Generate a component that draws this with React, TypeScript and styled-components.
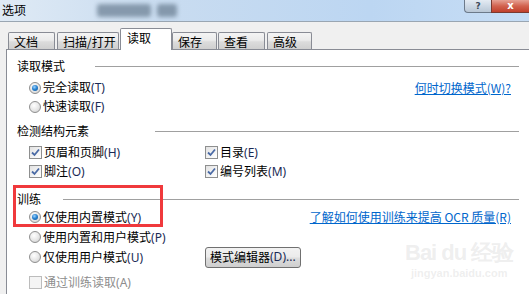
import React from "react";
import styled, { createGlobalStyle, css } from "styled-components";

const Global = createGlobalStyle`
  html, body { margin: 0; padding: 0; background: #f0f0f0; }
  body {
    font-family: "Microsoft YaHei", "Noto Sans CJK SC", "Noto Sans", sans-serif;
    font-size: 12px;
    color: #000;
  }
`;

const Window = styled.div`
  width: 529px;
  height: 294px;
  overflow: hidden;
  background: #f0f0f0;
  display: flex;
  flex-direction: column;
  position: relative;
`;

const TitleBar = styled.div`
  height: 21px;
  flex: none;
  display: flex;
  align-items: flex-start;
  background: linear-gradient(90deg, #dfeaf5 0%, #c9dcf0 30%, #bcd6f2 70%, #c6ddf5 100%);
  border-bottom: 1px solid #9aa6b2;
  position: relative;
`;

const Title = styled.div`
  padding: 3px 0 0 2px;
  font-size: 12px;
  line-height: 14px;
  color: #000;
`;

const Redaction = styled.div`
  position: absolute;
  top: 4px;
  height: 13px;
  border-radius: 3px;
  background: rgba(110, 130, 150, 0.75);
  filter: blur(2px);
`;

const Spacer = styled.div`
  flex: 1;
`;

const HelpButton = styled.div`
  width: 27px;
  height: 13px;
  box-sizing: border-box;
  border: 1px solid #6c7a8a;
  border-top: none;
  border-right: none;
  border-bottom-left-radius: 4px;
  background: linear-gradient(180deg, #e4ebf3 0%, #c9d5e2 60%, #b9c7d6 100%);
  color: #3d4b5a;
  font-family: "DejaVu Sans", sans-serif;
  font-weight: bold;
  font-size: 9px;
  line-height: 12px;
  text-align: center;
`;

const CloseButton = styled.div`
  width: 38px;
  height: 13px;
  box-sizing: border-box;
  border-left: 1px solid #7a3a30;
  border-bottom: 1px solid #7a3a30;
  background: linear-gradient(180deg, #e6a294 0%, #d2634f 50%, #c0402c 100%);
  color: #fff;
  font-family: "DejaVu Sans", sans-serif;
  font-weight: bold;
  font-size: 10px;
  line-height: 11px;
  text-align: center;
`;

const Body = styled.div`
  padding-top: 6px;
  display: flex;
  flex-direction: column;
`;

const TabRow = styled.div`
  height: 21px;
  display: flex;
  align-items: flex-end;
  padding-left: 8px;
  position: relative;
  z-index: 2;
`;

const Tab = styled.div<{ $w: number; $ml: number; $active?: boolean }>`
  width: ${(p) => p.$w}px;
  margin-left: ${(p) => p.$ml}px;
  box-sizing: border-box;
  border: 1px solid #898c95;
  border-bottom: none;
  border-radius: 2px 2px 0 0;
  font-size: 12px;
  white-space: nowrap;
  ${(p) =>
    p.$active
      ? css`
          height: 22px;
          margin-bottom: -1px;
          background: #fff;
          padding: 2px 0 0 6px;
          line-height: 14px;
        `
      : css`
          height: 17px;
          background: linear-gradient(180deg, #f4f4f4 0%, #ebebeb 45%, #dcdcdc 55%, #cfcfcf 100%);
          padding: 2px 0 0 5px;
          line-height: 14px;
        `}
`;

const Panel = styled.div`
  margin-left: 6px;
  width: 540px;
  height: 260px;
  box-sizing: border-box;
  background: #fff;
  border: 1px solid #898c95;
  padding: 9px 26px 0 10px;
  display: flex;
  flex-direction: column;
`;

const Heading = styled.div<{ $labelW: number; $mt: number }>`
  height: 14px;
  margin-top: ${(p) => p.$mt}px;
  display: grid;
  grid-template-columns: ${(p) => p.$labelW}px 1fr;
  align-items: center;
  line-height: 14px;
`;

const Rule = styled.div`
  height: 1px;
  background: #a0a0a0;
`;

const Grid = styled.div<{ $mt: number }>`
  margin-top: ${(p) => p.$mt}px;
  display: grid;
  grid-template-columns: 188px 1fr;
`;

const Row = styled.div<{ $h?: number; $indent?: number }>`
  height: ${(p) => p.$h ?? 19}px;
  display: flex;
  align-items: center;
  padding-left: ${(p) => p.$indent ?? 12}px;
  white-space: nowrap;
`;

const RightRow = styled.div<{ $h?: number }>`
  height: ${(p) => p.$h ?? 19}px;
  display: flex;
  align-items: center;
  justify-content: flex-end;
  padding-right: 8px;
  white-space: nowrap;
`;

const Label = styled.span<{ $disabled?: boolean }>`
  margin-left: 2px;
  line-height: 14px;
  color: ${(p) => (p.$disabled ? "#8d8d8d" : "#000")};
`;

const Mnemonic = styled.span<{ $disabled?: boolean }>`
  color: ${(p) => (p.$disabled ? "#8d8d8d" : "#1a2a55")};
  font-family: "Segoe UI", "Noto Sans", sans-serif;
`;

const Link = styled.span`
  color: #0066cc;
  text-decoration: underline;
  line-height: 14px;
`;

const RadioDot = styled.span<{ $on?: boolean }>`
  width: 12px;
  height: 12px;
  flex: none;
  box-sizing: border-box;
  border-radius: 50%;
  border: 1px solid #8f8f8f;
  background: radial-gradient(circle at 40% 35%, #ffffff 0%, #e6e6e6 55%, #c8c8c8 100%);
  display: flex;
  align-items: center;
  justify-content: center;
  &::after {
    content: "";
    display: ${(p) => (p.$on ? "block" : "none")};
    width: 6px;
    height: 6px;
    border-radius: 50%;
    background: radial-gradient(circle at 40% 35%, #9fd4ff 0%, #2a84d2 45%, #0d4f8f 100%);
  }
`;

const CheckBox = styled.span<{ $disabled?: boolean }>`
  width: 13px;
  height: 13px;
  flex: none;
  box-sizing: border-box;
  border: 1px solid ${(p) => (p.$disabled ? "#bcbcbc" : "#8e8f8f")};
  background: ${(p) =>
    p.$disabled ? "#f4f4f4" : "linear-gradient(135deg, #e2e2e2 0%, #f4f4f4 60%, #ffffff 100%)"};
  display: flex;
  align-items: center;
  justify-content: center;
`;

const Button = styled.div`
  width: 96px;
  height: 21px;
  box-sizing: border-box;
  border: 1px solid #707070;
  border-radius: 3px;
  background: linear-gradient(180deg, #f2f2f2 0%, #ebebeb 48%, #dddddd 52%, #cfcfcf 100%);
  padding-left: 4px;
  display: flex;
  align-items: center;
  line-height: 14px;
  white-space: nowrap;
`;

const RedBox = styled.div`
  position: absolute;
  left: 13px;
  top: 185px;
  width: 150px;
  height: 42px;
  box-sizing: border-box;
  border: 3px solid #f0393c;
  pointer-events: none;
`;

const Watermark = styled.div`
  position: absolute;
  left: 405px;
  top: 240px;
  color: rgba(200, 200, 200, 0.3);
  font-family: "Liberation Sans", sans-serif;
  text-align: center;
  pointer-events: none;
`;

const WmBig = styled.div`
  font-size: 22px;
  font-weight: bold;
  line-height: 26px;
  letter-spacing: -1px;
`;

const WmSmall = styled.div`
  font-size: 11px;
  line-height: 14px;
  font-weight: bold;
`;

const Check = () => (
  <svg width="9" height="9" viewBox="0 0 9 9">
    <path d="M1 4.5 L3.5 7 L8 1.5" fill="none" stroke="#4a6aa5" strokeWidth="1.8" />
  </svg>
);

const Radio = ({ on, text, m }: { on?: boolean; text: string; m: string }) => (
  <>
    <RadioDot $on={on} />
    <Label>
      {text}
      <Mnemonic>({m})</Mnemonic>
    </Label>
  </>
);

const Checked = ({ text, m, disabled }: { text: string; m: string; disabled?: boolean }) => (
  <>
    <CheckBox $disabled={disabled}>{!disabled && <Check />}</CheckBox>
    <Label $disabled={disabled}>
      {text}
      <Mnemonic $disabled={disabled}>({m})</Mnemonic>
    </Label>
  </>
);

export default function App() {
  return (
    <Window>
      <Global />
      <TitleBar>
        <Title>选项</Title>
        <Redaction style={{ left: 97, width: 54 }} />
        <Redaction style={{ left: 157, width: 20 }} />
        <Spacer />
        <HelpButton>?</HelpButton>
        <CloseButton>x</CloseButton>
      </TitleBar>
      <Body>
        <TabRow>
          <Tab $w={47} $ml={0}>文档</Tab>
          <Tab $w={62} $ml={2}>扫描/打开</Tab>
          <Tab $w={52} $ml={1} $active>读取</Tab>
          <Tab $w={45} $ml={0}>保存</Tab>
          <Tab $w={47} $ml={1}>查看</Tab>
          <Tab $w={45} $ml={2}>高级</Tab>
        </TabRow>
        <Panel>
          <Heading $labelW={78} $mt={0}>
            <span>读取模式</span>
            <Rule />
          </Heading>
          <Grid $mt={5}>
            <Row>
              <Radio on text="完全读取" m="T" />
            </Row>
            <RightRow>
              <Link>何时切换模式(W)? </Link>
            </RightRow>
            <Row>
              <Radio text="快速读取" m="F" />
            </Row>
            <div />
          </Grid>
          <Heading $labelW={138} $mt={8}>
            <span>检测结构元素</span>
            <Rule />
          </Heading>
          <Grid $mt={5}>
            <Row>
              <Checked text="页眉和页脚" m="H" />
            </Row>
            <Row $indent={0}>
              <Checked text="目录" m="E" />
            </Row>
            <Row>
              <Checked text="脚注" m="O" />
            </Row>
            <Row $indent={0}>
              <Checked text="编号列表" m="M" />
            </Row>
          </Grid>
          <Heading $labelW={46} $mt={11}>
            <span>训练</span>
            <Rule />
          </Heading>
          <Grid $mt={1}>
            <Row $h={20}>
              <Radio on text="仅使用内置模式" m="Y" />
            </Row>
            <RightRow $h={20}>
              <Link>了解如何使用训练来提高 OCR 质量(R)</Link>
            </RightRow>
            <Row $h={20}>
              <Radio text="使用内置和用户模式" m="P" />
            </Row>
            <div />
            <Row $h={20}>
              <Radio text="仅使用用户模式" m="U" />
            </Row>
            <Row $h={20} $indent={0}>
              <Button>
                模式编辑器<Mnemonic>(D)...</Mnemonic>
              </Button>
            </Row>
          </Grid>
          <Grid $mt={5}>
            <Row $h={20}>
              <Checked disabled text="通过训练读取" m="A" />
            </Row>
          </Grid>
        </Panel>
      </Body>
      <RedBox />
      <Watermark>
        <WmBig>Bai du 经验</WmBig>
        <WmSmall>jingyan.baidu.com</WmSmall>
      </Watermark>
    </Window>
  );
}
